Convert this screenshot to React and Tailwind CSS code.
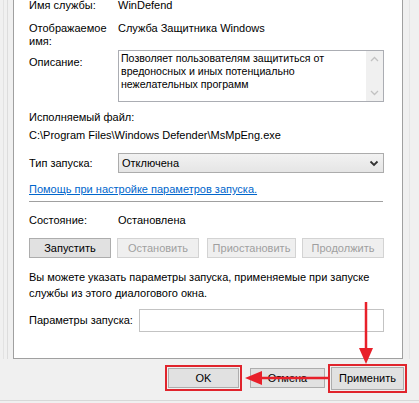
import React from "react";

const font = { fontFamily: '"Liberation Sans", Arial, sans-serif' };

const Btn = ({ children, disabled, className = "" }) => (
  <div
    className={
      "h-[20px] flex items-center justify-center border text-[11px] whitespace-nowrap " +
      (disabled
        ? "bg-[#efefef] border-[#d3d3d3] text-[#9f9f9f] "
        : "bg-[#e1e1e1] border-[#adadad] text-black ") +
      className
    }
  >
    {children}
  </div>
);

const App = () => {
  return (
    <div
      className="relative w-[419px] h-[403px] overflow-hidden bg-[#f0f0f0] text-[11px] text-black"
      style={font}
    >
      <div className="flex h-[359px]">
        {/* left window edge */}
        <div className="w-[13px] flex">
          <div className="w-[3px]" />
          <div className="w-[1px] bg-[#e2e2e2]" />
          <div className="w-[3px]" />
          <div className="w-[1px] bg-[#dcdcdc]" />
        </div>

        {/* tab page */}
        <div className="w-[390px] bg-white border-x border-b border-[#a0a0a0] pl-[15px] flex flex-col">
          <div className="mt-[-2px] h-[15px] flex items-center leading-[15px]">
            <div className="w-[89px]">Имя службы:</div>
            <div>WinDefend</div>
          </div>

          <div className="mt-[9px] h-[26px] flex leading-[13px]">
            <div className="w-[89px]">
              Отображаемое
              <br />
              имя:
            </div>
            <div>Служба Защитника Windows</div>
          </div>

          <div className="mt-[2px] h-[52px] flex">
            <div className="w-[89px] pt-[6px] leading-[13px]">Описание:</div>
            <div className="w-[266px] h-[52px] border border-[#abadb3] flex">
              <div className="flex-1 pl-[2px] pt-[1px] leading-[13px] text-[10.6px]">
                Позволяет пользователям защититься от
                <br />
                вредоносных и иных потенциально
                <br />
                нежелательных программ
              </div>
              <div className="w-[17px] bg-[#f0f0f0] flex flex-col items-center justify-between py-[5px]">
                <svg width="9" height="6" viewBox="0 0 9 6">
                  <polyline points="1,5 4.5,1.5 8,5" fill="none" stroke="#c2c2c2" strokeWidth="1.3" />
                </svg>
                <svg width="9" height="6" viewBox="0 0 9 6">
                  <polyline points="1,1 4.5,4.5 8,1" fill="none" stroke="#c2c2c2" strokeWidth="1.3" />
                </svg>
              </div>
            </div>
          </div>

          <div className="mt-[8px] h-[15px] leading-[15px]">Исполняемый файл:</div>
          <div className="mt-[3px] h-[15px] leading-[15px]">
            C:\Program Files\Windows Defender\MsMpEng.exe
          </div>

          <div className="mt-[10px] h-[20px] flex items-center">
            <div className="w-[89px]">Тип запуска:</div>
            <div className="w-[266px] h-[20px] border border-[#acacac] bg-gradient-to-b from-[#f2f2f2] to-[#e5e5e5] flex items-center justify-between pl-[3px] pr-[4px]">
              <span>Отключена</span>
              <svg width="10" height="7" viewBox="0 0 10 7">
                <polyline points="1.5,1.5 5,5 8.5,1.5" fill="none" stroke="#333" strokeWidth="1.8" />
              </svg>
            </div>
          </div>

          <div className="mt-[9px] h-[15px] leading-[15px]">
            <span className="text-[#0066cc] underline">
              Помощь при настройке параметров запуска.
            </span>
          </div>

          <div className="mt-[4px] h-[1px] w-[354px] bg-[#a0a0a0]" />

          <div className="mt-[11px] h-[15px] flex items-center leading-[15px]">
            <div className="w-[89px]">Состояние:</div>
            <div>Остановлена</div>
          </div>

          <div className="mt-[10px] flex">
            <Btn className="w-[82px]">Запустить</Btn>
            <Btn disabled className="w-[82px] ml-[6px]">Остановить</Btn>
            <Btn disabled className="w-[89px] ml-[8px]">Приостановить</Btn>
            <Btn disabled className="w-[82px] ml-[6px]">Продолжить</Btn>
          </div>

          <div className="mt-[11px] leading-[16px]">
            Вы можете указать параметры запуска, применяемые при запуске
            <br />
            службы из этого диалогового окна.
          </div>

          <div className="mt-[8px] h-[23px] flex items-center">
            <div className="w-[110px] whitespace-nowrap">Параметры запуска:</div>
            <div className="w-[245px] h-[23px] border border-[#c3c3c3] bg-white" />
          </div>
        </div>

        {/* right window edge */}
        <div className="w-[16px] flex">
          <div className="w-[6px]" />
          <div className="w-[1px] bg-[#e4e4e4]" />
        </div>
      </div>

      {/* dialog buttons */}
      <div className="h-[42px] border-b border-[#d8d8d8] flex items-start pl-[165px]">
        <div className="mt-[6px] w-[77px] h-[26px] border-2 border-[#e0242c] p-[1px]">
          <Btn className="w-full h-full">OK</Btn>
        </div>
        <Btn className="mt-[9px] ml-[8px] w-[75px]">Отмена</Btn>
        <div className="mt-[5px] ml-[3px] w-[79px] h-[29px] border-2 border-[#e0242c] p-[1px]">
          <Btn className="w-full h-full">Применить</Btn>
        </div>
      </div>

      {/* red annotation arrows */}
      <svg
        className="absolute left-0 top-0 pointer-events-none"
        width="419"
        height="403"
        viewBox="0 0 419 403"
      >
        <line x1="366" y1="302" x2="366" y2="350" stroke="#e8202a" strokeWidth="2.5" />
        <polygon points="359,348 373,348 366,364" fill="#e8202a" />
        <line x1="329" y1="378" x2="260" y2="378" stroke="#e8202a" strokeWidth="2.5" />
        <polygon points="262,371 262,385 245,378" fill="#e8202a" />
      </svg>
    </div>
  );
};

export default App;
